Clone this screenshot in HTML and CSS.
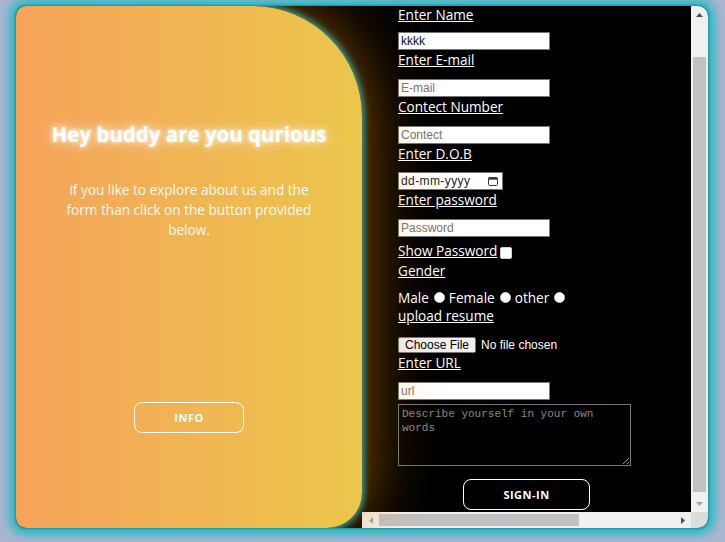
FILE: index.html
```html
<!DOCTYPE html>
<html lang="en">
<head>
<meta charset="utf-8">
<title>Sign in</title>
<link rel="stylesheet" href="styles.css">
</head>
<body>
<main class="card">
  <section class="intro">
    <h1 class="intro-title">Hey buddy are you qurious</h1>
    <p class="intro-text">if you like to explore about us and the form than click on the button provided below.</p>
    <button class="btn btn-info" type="button">INFO</button>
  </section>
  <div class="form-side">
    <section class="form-pane">
      <form class="form">
        <label class="field-label field-label-first" for="name">Enter Name</label>
        <input class="field field-first" id="name" type="text" value="kkkk">
        <label class="field-label" for="email">Enter E-mail</label>
        <input class="field" id="email" type="email" placeholder="E-mail">
        <label class="field-label" for="contact">Contect Number</label>
        <input class="field" id="contact" type="tel" placeholder="Contect">
        <label class="field-label" for="dob">Enter D.O.B</label>
        <div class="date-field">
          <input class="date-input" id="dob" type="text" placeholder="dd-mm-yyyy">
          <svg class="cal-icon" width="10" height="10" viewBox="0 0 10 10" aria-hidden="true">
            <rect x="0.5" y="1.5" width="9" height="8" rx="1.2" fill="none" stroke="#3b3b3b" stroke-width="1"/>
            <rect x="0.5" y="1.5" width="9" height="2.2" fill="#3b3b3b"/>
          </svg>
        </div>
        <label class="field-label" for="pwd">Enter password</label>
        <input class="field" id="pwd" type="password" placeholder="Password">
        <div class="row row-show"><label class="link" for="show">Show Password</label><input class="check" id="show" type="checkbox"></div>
        <div class="row"><span class="link">Gender</span></div>
        <div class="row row-gender">Male<input class="radio" type="radio" name="gender">Female<input class="radio" type="radio" name="gender">other<input class="radio" type="radio" name="gender"></div>
        <label class="field-label" for="resume">upload resume</label>
        <input class="file" id="resume" type="file">
        <label class="field-label" for="url">Enter URL</label>
        <input class="field field-url" id="url" type="url" placeholder="url">
        <textarea class="about" placeholder="Describe yourself in your own words"></textarea>
        <button class="btn btn-sign" type="submit">SIGN-IN</button>
      </form>
    </section>
    <div class="scrollbar scrollbar-v" aria-hidden="true">
      <span class="sb-arrow">
        <svg width="7" height="4" viewBox="0 0 7 4"><polygon points="0,4 3.5,0 7,4" fill="#505050"/></svg>
      </span>
      <span class="sb-track"><span class="sb-thumb"></span></span>
      <span class="sb-arrow">
        <svg width="7" height="4" viewBox="0 0 7 4"><polygon points="0,0 7,0 3.5,4" fill="#a3a3a3"/></svg>
      </span>
    </div>
    <div class="scrollbar scrollbar-h" aria-hidden="true">
      <span class="sb-arrow">
        <svg width="4" height="7" viewBox="0 0 4 7"><polygon points="4,0 4,7 0,3.5" fill="#a3a3a3"/></svg>
      </span>
      <span class="sb-track"><span class="sb-thumb"></span></span>
      <span class="sb-arrow">
        <svg width="4" height="7" viewBox="0 0 4 7"><polygon points="0,0 4,3.5 0,7" fill="#505050"/></svg>
      </span>
    </div>
    <div class="scrollbar-corner"></div>
  </div>
</main>
</body>
</html>
```

FILE: styles.css
```css
* { box-sizing: border-box; }

html, body { height: 100%; }

body {
  margin: 0;
  padding: 6px 17px 14px 16px;
  background: #aab6d0;
  font-family: "Open Sans", "Noto Sans", sans-serif;
}

.card {
  width: 692px;
  height: 522px;
  display: flex;
  border-radius: 10px;
  overflow: hidden;
  background: #000;
  box-shadow: 0 0 2px 1px #16939c, 0 0 10px 7px #2bbac6;
}

/* ---------- left intro panel ---------- */
.intro {
  position: relative;
  z-index: 1;
  flex: 0 0 346px;
  display: flex;
  flex-direction: column;
  align-items: center;
  text-align: center;
  padding-top: 114px;
  color: #fff;
  background: linear-gradient(to right, #f6a35b, #ebc64b);
  border-radius: 0 110px 35px 0;
  box-shadow: 0 0 6px 2px #2aaaa6, 0 0 70px rgba(255, 145, 0, 0.62);
}

.intro-title {
  margin: 0;
  font-size: 20.5px;
  font-weight: 700;
  line-height: 28px;
  color: #fff;
  text-shadow: 0 0 5px #fff, 0 0 14px rgba(255, 255, 255, 0.8);
}

.intro-text {
  width: 256px;
  margin: 32px 0 0;
  font-size: 13.6px;
  line-height: 20px;
  color: #fffaf0;
}

.btn {
  font-family: "Open Sans", "Noto Sans", sans-serif;
  font-size: 11px;
  font-weight: 700;
  letter-spacing: 0.5px;
  color: #fff;
  border: 1px solid #fff;
  border-radius: 8px;
  height: 31px;
  padding: 0;
  cursor: pointer;
}

.btn-info {
  width: 110px;
  margin-top: 162px;
  background: transparent;
}

/* ---------- right form side ---------- */
.form-side {
  flex: 1 1 auto;
  min-width: 0;
  display: grid;
  grid-template-columns: 1fr 17px;
  grid-template-rows: 1fr 16px;
}

.form-pane {
  min-height: 0;
  overflow: hidden;
  padding: 1px 36px 0;
  color: #fff;
  font-size: 13.6px;
}

.field-label,
.link {
  display: block;
  width: fit-content;
  line-height: 20px;
  color: #fff;
  text-decoration: underline;
}

.field-label-first { line-height: 16px; }

.link { display: inline; }

.field,
.date-field {
  display: block;
  width: 152px;
  height: 18px;
  margin: 8.75px 0 0;
  padding: 0 2px;
  border: 1px solid #767676;
  border-radius: 0;
  background: #fff;
  color: #111;
  font: 12px "Liberation Sans", Arial, sans-serif;
}

.field-first { margin-top: 9px; }

.field::placeholder { color: #757575; }

.date-field {
  display: flex;
  align-items: center;
  width: 105px;
  padding: 0 4px 0 0;
}

.date-input {
  flex: 1 1 auto;
  min-width: 0;
  height: 100%;
  padding: 0 0 0 2px;
  border: 0;
  background: transparent;
  font: 12px "Liberation Sans", Arial, sans-serif;
  letter-spacing: 0.4px;
  color: #000;
}

.date-input::placeholder { color: #1c1c1c; }

.cal-icon { flex: 0 0 auto; }

.row { line-height: 20px; }

.row-show { margin-top: 4px; }

.row-gender {
  line-height: 16px;
  margin-top: 9px;
}

.check,
.radio {
  appearance: none;
  -webkit-appearance: none;
  margin: 0;
  background: #fff;
  border: 1px solid #cfcfcf;
}

.check {
  width: 12px;
  height: 12px;
  margin-left: 3px;
  border-radius: 2px;
  vertical-align: -3px;
}

.radio {
  width: 11px;
  height: 11px;
  margin: 0 4px 0 5px;
  border-radius: 50%;
  vertical-align: 0;
}

.file {
  display: block;
  height: 16px;
  margin-top: 11px;
  color: #fff;
  font: 12px "Liberation Sans", Arial, sans-serif;
}

.file::file-selector-button {
  height: 16px;
  padding: 0 6px;
  margin: 0 5px 0 0;
  border: 1px solid #767676;
  border-radius: 2px;
  background: #efefef;
  color: #000;
  font: 12px "Liberation Sans", Arial, sans-serif;
}

.field-url { margin-top: 9px; }

.about {
  display: block;
  width: 233px;
  height: 62px;
  margin-top: 4px;
  padding: 2px 3px;
  border: 1px solid #767676;
  background: transparent;
  color: #fff;
  font: 11px/14px "Liberation Mono", "DejaVu Sans Mono", monospace;
}

.about::placeholder { color: #8a8a8a; }

.btn-sign {
  display: block;
  width: 127px;
  margin: 13px auto 0;
  background: #000;
}

/* ---------- drawn scrollbars ---------- */
.scrollbar {
  display: flex;
  background: #f0f0f0;
}

.scrollbar-v { flex-direction: column; }

.sb-arrow {
  flex: 0 0 17px;
  display: flex;
  align-items: center;
  justify-content: center;
}

.sb-track {
  flex: 1 1 auto;
  display: flex;
}

.scrollbar-v .sb-track { flex-direction: column; }

.sb-thumb {
  display: block;
  background: #c1c1c1;
}

.scrollbar-v .sb-thumb {
  width: 13px;
  height: 435px;
  margin: 34px 2px 0;
}

.scrollbar-h .sb-thumb {
  width: 200px;
  height: 12px;
  margin: 2px 0 0;
}

.scrollbar-corner { background: #dcdcdc; }
```
